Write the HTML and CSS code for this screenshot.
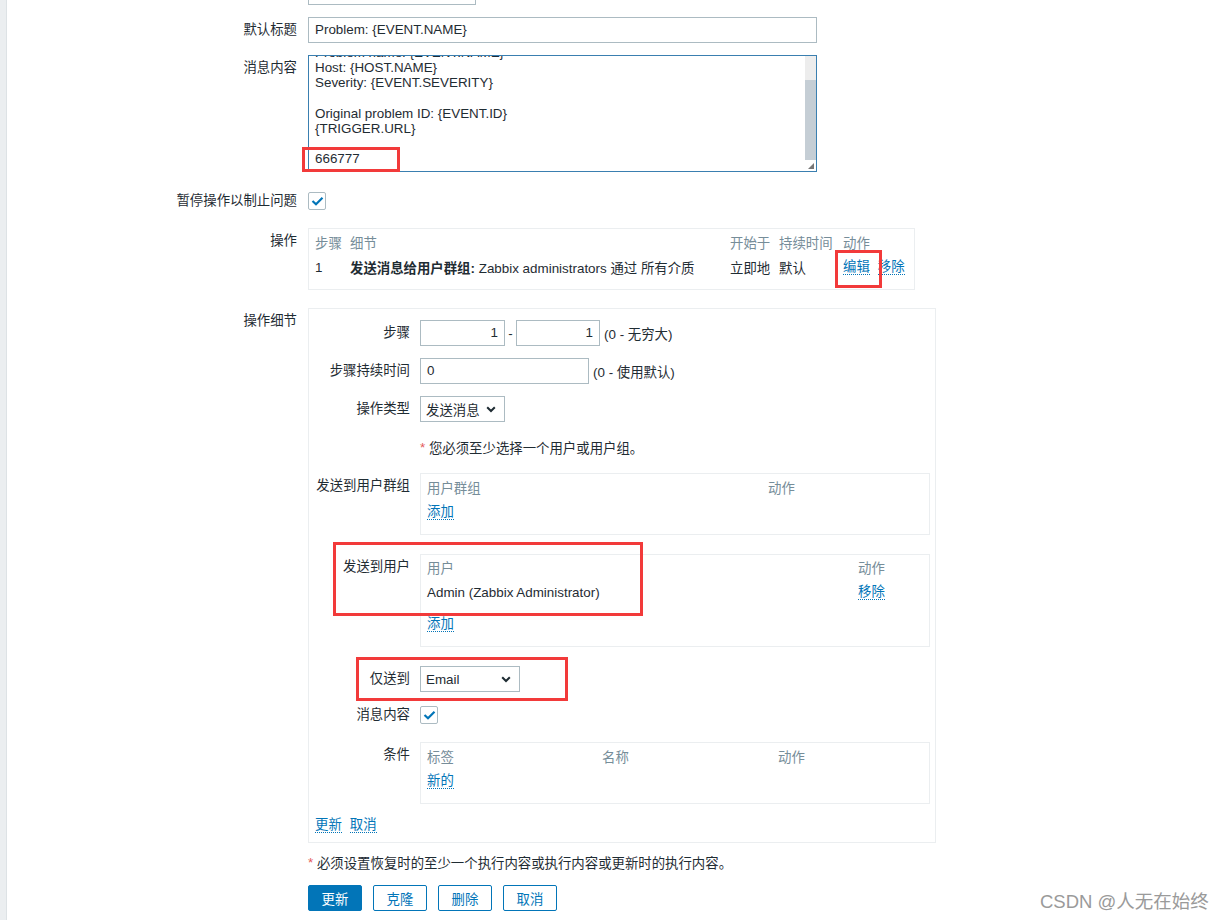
FILE: index.html
```html
<!DOCTYPE html>
<html lang="zh-CN">
<head>
<meta charset="utf-8">
<title>Action operations</title>
<link rel="stylesheet" href="styles.css">
</head>
<body>
<div class="page">
  <aside class="sidebar"></aside>
  <main class="main">
    <div class="row row-first">
      <div class="lbl"></div>
      <div class="ctl"><div class="input w-top"></div></div>
    </div>

    <div class="row gap12">
      <div class="lbl">默认标题</div>
      <div class="ctl"><div class="input w-wide">Problem: {EVENT.NAME}</div></div>
    </div>

    <div class="row gap12">
      <div class="lbl">消息内容</div>
      <div class="ctl">
        <div class="textarea">
          <div class="ta-text">
            <div class="ta-lines">Problem name: {EVENT.NAME}<br>Host: {HOST.NAME}<br>Severity: {EVENT.SEVERITY}<br><br>Original problem ID: {EVENT.ID}<br>{TRIGGER.URL}<br><br>666777</div>
          </div>
          <div class="ta-scroll">
            <div class="ta-track"></div>
            <div class="ta-thumb"></div>
            <div class="ta-corner"><svg width="6" height="6" viewBox="0 0 6 6"><path d="M6 0 L6 6 L0 6 Z" fill="#777"/></svg></div>
          </div>
        </div>
      </div>
    </div>

    <div class="row gap16">
      <div class="lbl">暂停操作以制止问题</div>
      <div class="ctl ctl-center"><span class="check"><svg width="13" height="10" viewBox="0 0 13 10"><path d="M1.5 5 L5 8.3 L11.5 1.8" fill="none" stroke="#0275b8" stroke-width="2.2"/></svg></span></div>
    </div>

    <div class="row gap14">
      <div class="lbl">操作</div>
      <div class="ctl">
        <div class="box ops">
          <div class="ops-grid">
            <div class="th">步骤</div><div class="th">细节</div><div class="th">开始于</div><div class="th">持续时间</div><div class="th">动作</div>
            <div class="td">1</div>
            <div class="td"><b>发送消息给用户群组:</b> Zabbix administrators 通过 所有介质</div>
            <div class="td">立即地</div>
            <div class="td">默认</div>
            <div class="td acts"><a class="lnk">编辑</a><a class="lnk">移除</a></div>
          </div>
        </div>
      </div>
    </div>

    <div class="row gap18">
      <div class="lbl">操作细节</div>
      <div class="ctl">
        <div class="box details">
          <div class="irow">
            <div class="ilbl">步骤</div>
            <div class="ictl">
              <div class="input num w-step1">1</div>
              <span class="dash">-</span>
              <div class="input num w-step2">1</div>
              <span class="hint">(0 - 无穷大)</span>
            </div>
          </div>
          <div class="irow gap12">
            <div class="ilbl">步骤持续时间</div>
            <div class="ictl">
              <div class="input w-dur">0</div>
              <span class="hint">(0 - 使用默认)</span>
            </div>
          </div>
          <div class="irow gap12">
            <div class="ilbl">操作类型</div>
            <div class="ictl">
              <div class="select w-type"><span class="sel-text cjk">发送消息</span><svg class="chev" width="10" height="7" viewBox="0 0 10 7"><path d="M1.2 1.2 L5 5 L8.8 1.2" fill="none" stroke="#1f2c33" stroke-width="2"/></svg></div>
            </div>
          </div>
          <div class="irow gap12">
            <div class="ilbl"></div>
            <div class="ictl"><span class="req">*</span>&nbsp;您必须至少选择一个用户或用户组。</div>
          </div>
          <div class="irow gap13">
            <div class="ilbl">发送到用户群组</div>
            <div class="ictl">
              <div class="box tbl">
                <div class="tr thr"><div class="c-g1 th">用户群组</div><div class="th">动作</div></div>
                <div class="tr"><a class="lnk">添加</a></div>
              </div>
            </div>
          </div>
          <div class="irow gap19">
            <div class="ilbl">发送到用户</div>
            <div class="ictl">
              <div class="box tbl tbl-users">
                <div class="tr thr2"><div class="c-u1 th">用户</div><div class="th">动作</div></div>
                <div class="tr"><div class="c-u1">Admin (Zabbix Administrator)</div><a class="lnk">移除</a></div>
                <div class="tr tr-add"><a class="lnk">添加</a></div>
              </div>
            </div>
          </div>
          <div class="irow gap19">
            <div class="ilbl">仅送到</div>
            <div class="ictl">
              <div class="select w-media"><span class="sel-text">Email</span><svg class="chev" width="10" height="7" viewBox="0 0 10 7"><path d="M1.2 1.2 L5 5 L8.8 1.2" fill="none" stroke="#1f2c33" stroke-width="2"/></svg></div>
            </div>
          </div>
          <div class="irow gap10">
            <div class="ilbl">消息内容</div>
            <div class="ictl ctl-center"><span class="check"><svg width="13" height="10" viewBox="0 0 13 10"><path d="M1.5 5 L5 8.3 L11.5 1.8" fill="none" stroke="#0275b8" stroke-width="2.2"/></svg></span></div>
          </div>
          <div class="irow gap14">
            <div class="ilbl">条件</div>
            <div class="ictl">
              <div class="box tbl">
                <div class="tr thr"><div class="c-c1 th">标签</div><div class="c-c2 th">名称</div><div class="th">动作</div></div>
                <div class="tr"><a class="lnk">新的</a></div>
              </div>
            </div>
          </div>
          <div class="foot-links"><a class="lnk">更新</a><a class="lnk">取消</a></div>
        </div>
      </div>
    </div>

    <div class="row gap6">
      <div class="lbl"></div>
      <div class="ctl note"><span class="req">*</span>&nbsp;必须设置恢复时的至少一个执行内容或执行内容或更新时的执行内容。</div>
    </div>

    <div class="row gap10">
      <div class="lbl"></div>
      <div class="ctl buttons">
        <button class="btn btn-main">更新</button>
        <button class="btn">克隆</button>
        <button class="btn">删除</button>
        <button class="btn">取消</button>
      </div>
    </div>
  </main>

  <div class="mark m1"></div>
  <div class="mark m2"></div>
  <div class="mark m3"></div>
  <div class="mark m4"></div>
  <div class="watermark">CSDN @人无在始终</div>
</div>
</body>
</html>
```

FILE: styles.css
```css
* { box-sizing: border-box; }
html, body { margin: 0; padding: 0; background: #fff; }
body {
  font-family: "Liberation Sans", "Noto Sans CJK SC", sans-serif;
  font-size: 13.4px;
  color: #1f2c33;
  overflow: hidden;
}
.page {
  position: relative;
  display: flex;
  width: 1227px;
  height: 920px;
  overflow: hidden;
}
.sidebar {
  width: 7px;
  flex: none;
  background: #ebeef0;
  border-right: 1px solid #dde2e5;
}
.main { flex: 1; display: flex; flex-direction: column; }

.row { display: flex; column-gap: 11px; }
.row-first { margin-top: -21px; }
.gap6 { margin-top: 6px; }
.gap10 { margin-top: 10px; }
.gap12 { margin-top: 12px; }
.gap13 { margin-top: 13px; }
.gap14 { margin-top: 14px; }
.gap16 { margin-top: 16px; }
.gap18 { margin-top: 18px; }
.gap19 { margin-top: 19px; }

.lbl {
  width: 290px;
  flex: none;
  text-align: right;
  line-height: 26px;
  white-space: nowrap;
}
.ctl { display: flex; align-items: flex-start; min-height: 26px; }
.ctl-center { align-items: center; height: 26px; }

.input {
  height: 26px;
  border: 1px solid #acbbc2;
  background: #fff;
  line-height: 24px;
  padding: 0 6px;
  white-space: nowrap;
  overflow: hidden;
}
.input.num { text-align: right; }
.w-top { width: 168px; }
.w-wide { width: 509px; }
.w-step1 { width: 85px; }
.w-step2 { width: 84px; }
.w-dur { width: 169px; }

.textarea {
  width: 509px;
  height: 117px;
  border: 1px solid #3a7fb0;
  display: flex;
  overflow: hidden;
}
.ta-text { flex: 1; overflow: hidden; padding: 0 6px; }
.ta-lines { margin-top: -11px; line-height: 15.2px; white-space: nowrap; }
.ta-scroll { width: 11px; flex: none; display: flex; flex-direction: column; }
.ta-track { height: 24px; background: #ededed; }
.ta-thumb { height: 80px; background: #c5ced5; }
.ta-corner { flex: 1; display: flex; align-items: flex-end; justify-content: flex-end; padding: 0 2px 2px 0; background: #fff; }

.check {
  width: 18px;
  height: 18px;
  border: 1px solid #acbbc2;
  border-radius: 2px;
  background: #fff;
  display: flex;
  align-items: center;
  justify-content: center;
}

.box { border: 1px solid #ebeef0; background: #fff; }
.ops { width: 607px; height: 62px; padding: 1px 6px 0 6px; }
.ops-grid {
  display: grid;
  grid-template-columns: 35px 380px 49px 64px auto;
  grid-template-rows: 24px 26px;
  align-items: center;
}
.th { color: #768d99; white-space: nowrap; }
.td { white-space: nowrap; }
.td b { font-weight: bold; }
.acts { display: flex; column-gap: 8px; }

.lnk {
  color: #0275b8;
  border-bottom: 1px dotted #0275b8;
  line-height: 15px;
  cursor: pointer;
  white-space: nowrap;
}

.details {
  width: 628px;
  padding: 11px 5px 4px 6px;
}
.irow { display: flex; column-gap: 10px; }
.ilbl {
  width: 95px;
  flex: none;
  text-align: right;
  line-height: 26px;
  white-space: nowrap;
}
.ictl { display: flex; align-items: center; min-height: 26px; flex: 1; white-space: nowrap; }
.dash { width: 11px; text-align: center; }
.hint { margin-left: 4px; }
.req { color: #e45959; }

.select {
  height: 26px;
  border: 1px solid #acbbc2;
  background: #fff;
  display: flex;
  align-items: center;
  justify-content: space-between;
  padding: 0 8px 0 5px;
}
.w-type { width: 85px; }
.w-media { width: 100px; }
.chev { flex: none; }

.tbl { width: 510px; height: 62px; padding: 1px 6px 0 6px; }
.tbl-users { height: 93px; padding-top: 0; }
.tr { display: flex; align-items: center; height: 26px; }
.thr, .thr2 { height: 24px; }
.tr-add { margin-top: 6px; }
.c-g1 { width: 341px; }
.c-u1 { width: 431px; }
.c-c1 { width: 175px; }
.c-c2 { width: 176px; }

.foot-links { display: flex; align-items: center; column-gap: 8px; height: 26px; margin-top: 8px; }

.note { align-items: center; height: 26px; white-space: nowrap; }

.buttons { column-gap: 11px; }
.btn {
  width: 54px;
  height: 26px;
  border: 1px solid #0275b8;
  border-radius: 2px;
  background: #fff;
  color: #0275b8;
  font-family: inherit;
  font-size: 13.4px;
  padding: 0;
}
.btn-main { background: #0275b8; color: #fff; }

.mark { position: absolute; border: 3px solid #f23a3a; }
.m1 { left: 302px; top: 147px; width: 98px; height: 25px; }
.m2 { left: 835px; top: 250px; width: 47px; height: 38px; }
.m3 { left: 333px; top: 542px; width: 310px; height: 74px; }
.m4 { left: 356px; top: 657px; width: 212px; height: 44px; }

.watermark {
  position: absolute;
  left: 1040px;
  top: 887px;
  font-size: 18.5px;
  color: #9a9a9a;
  white-space: nowrap;
  font-family: "Liberation Sans", "Noto Sans CJK SC", sans-serif;
}
```
